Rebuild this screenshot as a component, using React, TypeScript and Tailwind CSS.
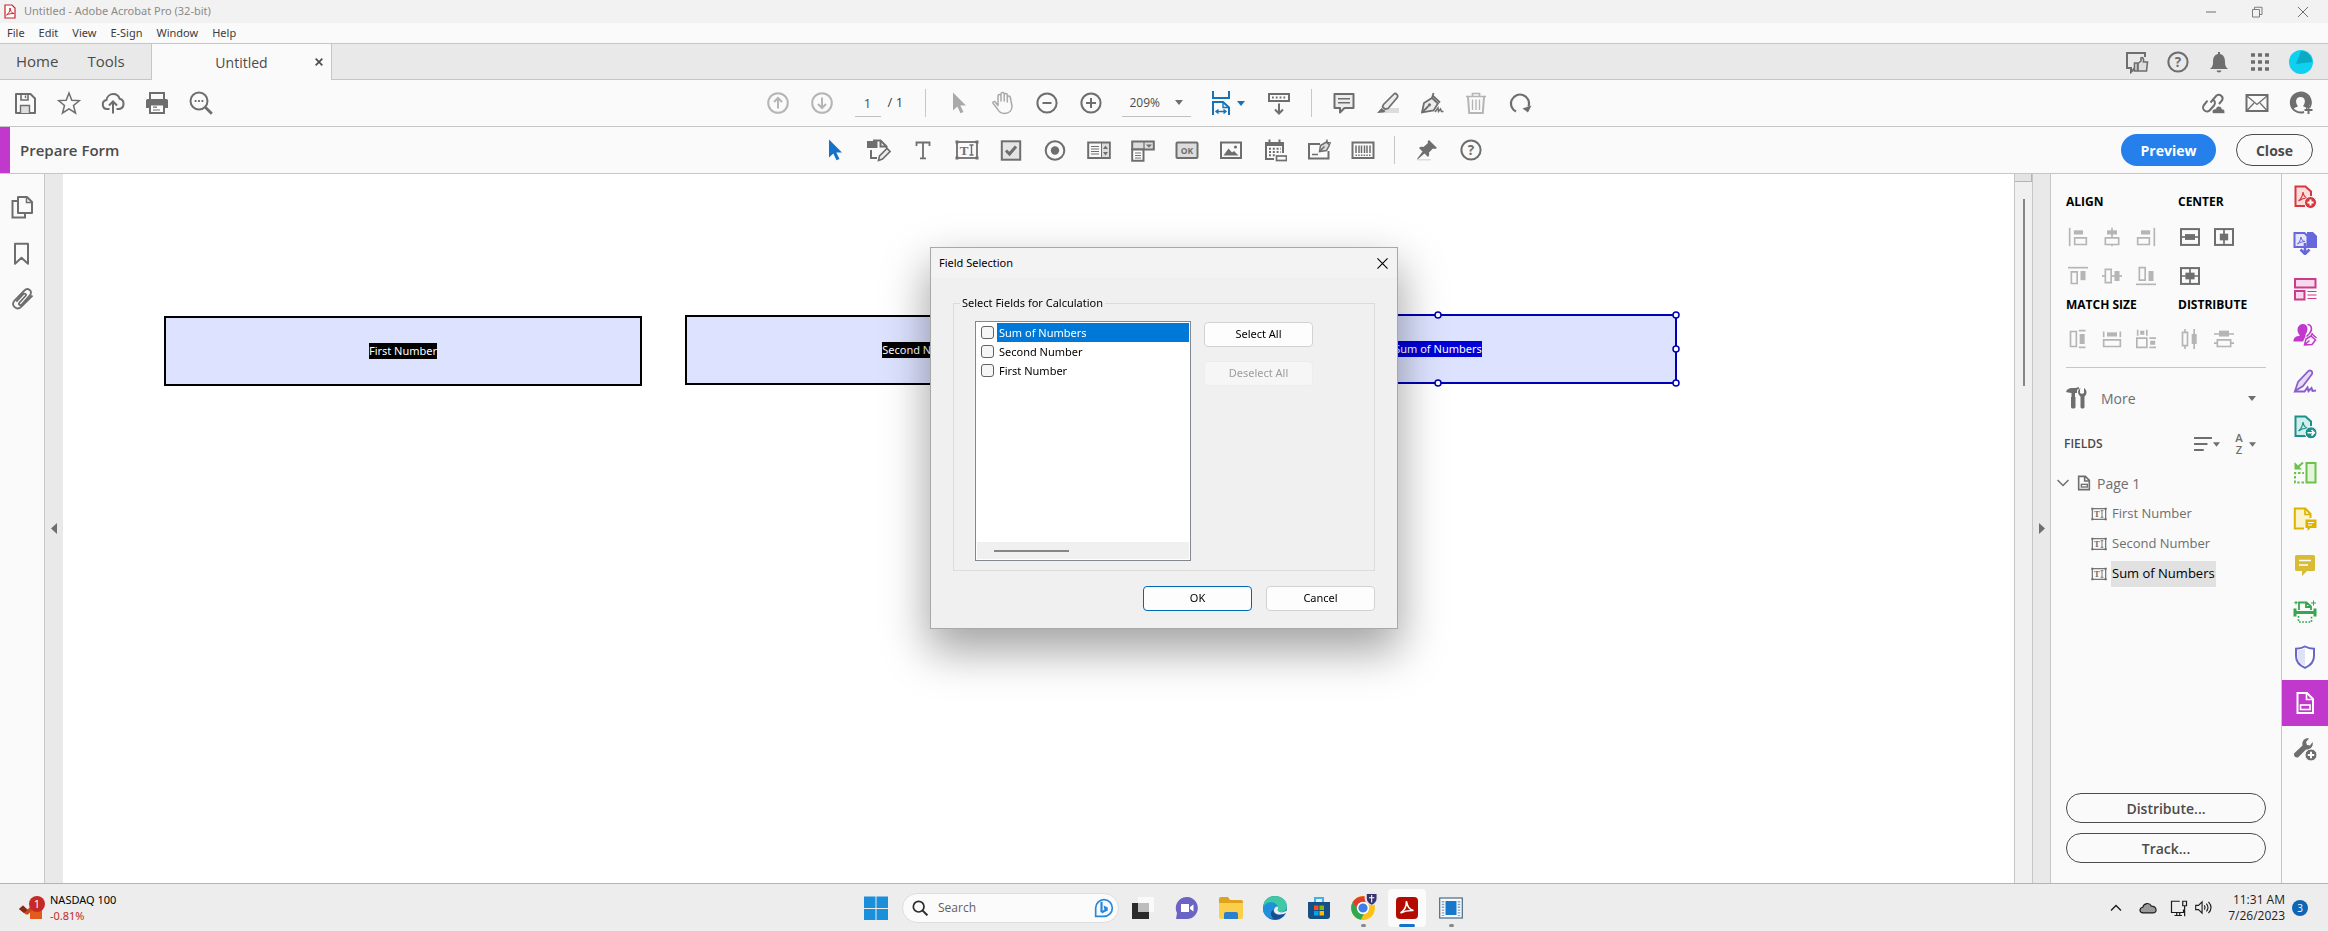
import React, { ReactNode, useState } from "react";

import clsx from "clsx";

interface SvgProps {
  children: ReactNode;
  className?: string;
}

function Svg({ children, className = "w-6 h-6" }: SvgProps) {
  return (
    <svg viewBox="0 0 24 24" fill="none" stroke="currentColor" strokeWidth="2" className={clsx("shrink-0", className)} aria-hidden="true">
      {children}
    </svg>
  );
}

interface ToolProps {
  label: string;
  icon: ReactNode;
  className?: string;
}

function Tool({ label, icon, className = "" }: ToolProps) {
  return (
    <button aria-label={label} className={clsx("w-11 h-11 flex items-center justify-center shrink-0", className)}>
      {icon}
    </button>
  );
}

function Caret({ className = "" }: { className?: string }) {
  return (
    <svg viewBox="0 0 8 5" className={clsx("w-2 h-[5px] shrink-0", className)} fill="currentColor" aria-hidden="true">
      <path d="M0 0h8L4 5z" />
    </svg>
  );
}

function Separator({ className = "" }: { className?: string }) {
  return <div className={clsx("w-px h-7 bg-[#c8c8c8] shrink-0", className)} />;
}

/* Shared drawings */

const helpIcon = (
  <Svg>
    <circle cx="12" cy="12" r="9.6" />
    <text x="12" y="16.8" textAnchor="middle" fontSize="13.5" fontWeight="700" fill="currentColor" stroke="none">?</text>
  </Svg>
);

const textFieldIcon = (
  <Svg>
    <rect x="2" y="4" width="20" height="16" strokeWidth="1.8" />
    <path d="M.5 2.500h3v3h-3zM20.500 2.500h3v3h-3zM.5 18.500h3v3h-3zM20.500 18.500h3v3h-3z" fill="currentColor" stroke="none" />
    <text x="9" y="16.600" textAnchor="middle" fontSize="13" fontWeight="700" fontFamily="Liberation Serif, serif" fill="currentColor" stroke="none">T</text>
    <path d="M14.500 7h4M14.500 17h4M16.500 7v10" strokeWidth="1.400" />
  </Svg>
);

const saveIcon = (
  <Svg>
    <path d="M3 3h14.500L22 7.500V22H3z" strokeLinejoin="round" />
    <path d="M8 3v6h7V3" strokeWidth="1.6" />
    <path d="M12.500 4.500v2.500" strokeWidth="1.400" />
    <path d="M7.500 22v-7.500h9V22" fill="#dedede" strokeWidth="1.400" />
  </Svg>
);

const starIcon = (
  <Svg>
    <path d="M12 2l2.800 7.200 7.700.4-6 4.900 2 7.500-6.500-4.200L5.500 22l2-7.500-6-4.900 7.700-.4z" strokeWidth="1.500" />
  </Svg>
);

const cloudUpIcon = (
  <Svg>
    <path d="M8.500 18H6a4.500 4.500 0 0 1-.6-8.900C6 5.500 9 3 12.300 3c3 0 5.400 1.800 6.300 4.800A5.200 5.200 0 0 1 18 18h-2.500" />
    <path d="M12 22.500V11M8 14.500l4-4 4 4" />
  </Svg>
);

const printIcon = (
  <Svg>
    <path d="M5 8V2h14v6" />
    <path d="M1 9.500A1.500 1.500 0 0 1 2.500 8h19A1.500 1.500 0 0 1 23 9.500V17h-4v-3H5v3H1z" fill="currentColor" stroke="none" />
    <path d="M5 13.500h14V22H5z" fill="#fff" />
    <path d="M8 16.200h4M8 19h7" strokeWidth="1.200" />
  </Svg>
);

const searchDotsIcon = (
  <Svg>
    <circle cx="10" cy="10" r="8.500" />
    <path d="M16.300 16.300l6.500 6.500" strokeWidth="2.800" />
    <path d="M5.700 10h1.800M9.100 10h1.800M12.500 10h1.800" strokeWidth="1.800" />
  </Svg>
);

const pageUpIcon = (
  <Svg>
    <circle cx="12" cy="12" r="9.800" />
    <path d="M12 17.500V7M8 11l4-4 4 4" />
  </Svg>
);

const pageDownIcon = (
  <Svg>
    <circle cx="12" cy="12" r="9.800" />
    <path d="M12 6.500V17M8 13l4 4 4-4" />
  </Svg>
);

const cursorIcon = (
  <Svg>
    <path d="M6 1.500v18l4.300-4 3.200 6.700 3-1.300-3.200-6.500h5.700z" fill="currentColor" stroke="none" />
  </Svg>
);

const handIcon = (
  <Svg>
    <path d="M7 14.500V5a1.500 1.500 0 0 1 3 0v5V3a1.500 1.500 0 0 1 3.200 0v7V4a1.500 1.500 0 0 1 3.100 0v7V6.500a1.500 1.500 0 0 1 3 0L21 15c0 4-2.500 7.500-7.500 7.500-3.500 0-5.500-1.500-7-4.500L2 12.300c-.6-1.300.8-2.400 2-1.600z" strokeWidth="1.500" strokeLinejoin="round" />
  </Svg>
);

const minusIcon = (
  <Svg>
    <circle cx="12" cy="12" r="9.600" />
    <path d="M7.500 12h9" />
  </Svg>
);

const plusIcon = (
  <Svg>
    <circle cx="12" cy="12" r="9.600" />
    <path d="M7 12h10M12 7v10" />
  </Svg>
);

const fitWidthIcon = (
  <Svg>
    <path d="M4 0v7h16V0M4 24V11h10l6 5.500V24" />
    <path d="M14 11v5.500h6" strokeWidth="1.400" />
    <path d="M7.500 20.500h9M9.500 18.500l-2.500 2 2.500 2M14.500 18.500l2.500 2-2.500 2" strokeWidth="1.400" />
  </Svg>
);

const keyboardDownIcon = (
  <Svg>
    <rect x="2" y="3" width="20" height="7" />
    <path d="M5 6.500h14" strokeDasharray="1.800 2" />
    <path d="M12 12.500V22M8 18.500l4 4 4-4" />
  </Svg>
);

const commentIcon = (
  <Svg>
    <path d="M2.500 3h19v14h-9L8 21.500V17H2.500z" strokeLinejoin="round" fill="#ececec" />
    <path d="M6 7.800h12M6 11.800h12" strokeWidth="1.400" />
  </Svg>
);

const highlightIcon = (
  <Svg>
    <path d="M9 17h14v5H8z" fill="#dcdcdc" stroke="none" />
    <path d="M7.500 13.500L18 3c1.500-1.400 4.800 1 3.300 3.500L12 17.500l-3 .5-2.500-2z" strokeWidth="1.700" fill="#ececec" />
    <path d="M5.500 17l4 3-1.500 1.500L1 22z" fill="currentColor" stroke="none" />
  </Svg>
);

const penIcon = (
  <Svg>
    <path d="M2 21.500l2-9.500 8-5 6 5.500-4.500 7z" strokeWidth="1.800" fill="#ececec" />
    <path d="M2 21.500l6.500-6.500M12 7l1.500-5M12.500 4.500l7.500 7" strokeWidth="1.800" />
    <circle cx="9.500" cy="13.800" r="1.600" fill="currentColor" stroke="none" />
    <path d="M15 21l3-4 .5 3.500 2-2.500 1 2.500h2" strokeWidth="1.500" />
  </Svg>
);

const trashIcon = (
  <Svg>
    <path d="M2 5.500h20M8.500 5V2.500h7V5" strokeWidth="1.700" />
    <path d="M4 6l1.200 16h13.600L20 6" strokeWidth="2" />
    <path d="M8.500 8.500v10.500M12 8.500v10.500M15.500 8.500v10.500" strokeWidth="1.300" />
  </Svg>
);

const rotateIcon = (
  <Svg>
    <path d="M8 20.600A9 9 0 1 1 20.500 15.500" strokeWidth="2.200" />
    <path d="M14.500 17.500l9-3-3.500 7z" fill="currentColor" stroke="none" />
  </Svg>
);

const linkCloudIcon = (
  <Svg>
    <path d="M9.500 11.500l6-7a3.800 3.800 0 0 1 5.500 5l-3 3.500M12 8.500a4 4 0 0 1 1 6l-4 4.500a3.800 3.800 0 0 1-6-5l3.500-4.300" />
    <path d="M12 22.500c-2-3 .6-5 2.600-4.500 1.500-4.500 6-3 6.400 0 2.600 0 3.300 2.600 2.500 4.500z" fill="currentColor" stroke="#fafafa" strokeWidth=".6" />
  </Svg>
);

const mailIcon = (
  <Svg>
    <rect x="1.500" y="4" width="21" height="16" />
    <path d="M2 5l10 8.500L22 5M2 19.500l7-7.500M22 19.500l-7-7.500" strokeWidth="1.300" />
  </Svg>
);

const addPersonIcon = (
  <Svg>
    <path d="M20.500 16.500A10 10 0 1 0 15 21" strokeWidth="2" />
    <path d="M4 18.500c1-2 3.500-2 5-3.500-2.700-2.500-3-9 2.500-9s5.200 6.500 2.500 9c.8.8 1.700 1 3 1.500V19l5-7C21 5 16 2 11.500 2S1 6 2 12.500z" fill="currentColor" stroke="none" fillRule="evenodd" />
    <path d="M19.500 15v8M15.500 19h8" strokeWidth="2" />
  </Svg>
);

const feedbackIcon = (
  <Svg>
    <path d="M20 7V3H2v15h4v4l4-4" />
    <path d="M9.500 13h3v8h-3zM13 13.500l3-2.500V8c2-1 3 .5 2.500 4h4l-1 9H13z" strokeWidth="1.600" fill="#dedede" />
  </Svg>
);

const bellIcon = (
  <Svg>
    <path d="M11 2h2v2c4 1 5 4 5 8s1 5 3 7H3c2-2 3-3 3-7s1-7 5-8zM9.500 20.500h5c-.5 2.500-4.500 2.500-5 0z" fill="currentColor" stroke="none" />
  </Svg>
);

const appsIcon = (
  <Svg>
    <path d="M3 5h18M3 12h18M3 19h18" strokeWidth="3.600" strokeDasharray="4 3" />
  </Svg>
);

const formEditIcon = (
  <Svg>
    <path d="M.5 4h9v5h-9z" fill="currentColor" />
    <path d="M6 2.500h7.500l6 6v1.500M13.500 2.500v6h6M4 12v8h6" />
    <path d="M11.500 22.500l1-4.500 7.500-7.500 3 3-7.500 7.500z" strokeWidth="1.600" fill="#ececec" />
  </Svg>
);

const textIcon = (
  <Svg>
    <path d="M5.500 8V4.500h13V8M12 4.500v15.500M9 20.300h6" strokeWidth="1.800" />
  </Svg>
);

const checkFieldIcon = (
  <Svg>
    <rect x="2.800" y="3.300" width="18.400" height="18.400" fill="#e4e4e4" />
    <path d="M7 12.500l3.500 3.500L17 8.500" strokeWidth="3" />
  </Svg>
);

const radioFieldIcon = (
  <Svg>
    <circle cx="12" cy="12.500" r="9.300" />
    <circle cx="12" cy="12.500" r="4.200" fill="currentColor" stroke="none" />
  </Svg>
);

const listBoxIcon = (
  <Svg>
    <rect x="1.200" y="4.500" width="21.600" height="15.500" />
    <path d="M14.500 5h8v14.500h-8z" fill="#dcdcdc" strokeWidth="1" />
    <path d="M4 8.500h8M4 11h8M4 13.500h8M4 16h8" strokeWidth="1.200" />
    <path d="M16 11l2.500-3.500L21 11zM16 14l2.500 3.500L21 14z" fill="currentColor" stroke="none" />
  </Svg>
);

const dropdownFieldIcon = (
  <Svg>
    <rect x="1.200" y="3.500" width="21.600" height="8" fill="#dcdcdc" />
    <path d="M13 3.500v8" strokeWidth="1.200" />
    <path d="M15 6.500h6l-3 3.200z" fill="currentColor" stroke="none" />
    <path d="M1.200 11.500h11.300v11.300H1.200z" fill="#fff" />
    <path d="M4 15h6M4 17.500h6M4 20h6" strokeWidth="1.100" />
  </Svg>
);

const okFieldIcon = (
  <Svg>
    <rect x="1.500" y="4.500" width="21" height="15.500" rx="1" fill="#dcdcdc" />
    <text x="12" y="15.500" textAnchor="middle" fontSize="8.500" fontWeight="700" fill="currentColor" stroke="none">OK</text>
  </Svg>
);

const imageFieldIcon = (
  <Svg>
    <rect x="2" y="4.500" width="20" height="15.500" />
    <path d="M4.500 17.500l5-7 3.500 4 2-1.500 4.500 4.500z" fill="currentColor" stroke="none" />
    <circle cx="16.500" cy="9" r="1.600" fill="currentColor" stroke="none" />
  </Svg>
);

const dateFieldIcon = (
  <Svg>
    <path d="M2 4h19v4H2zM5.500 1.500h2V4h-2zM15.500 1.500h2V4h-2z" fill="currentColor" stroke="none" />
    <path d="M11 21H3V6h17v9" />
    <path d="M6 10.800h12M6 14h12M6 17.200h6" strokeDasharray="2 1.800" />
    <rect x="13.500" y="18" width="10" height="4.500" strokeWidth="1.700" />
  </Svg>
);

const signFieldIcon = (
  <Svg>
    <path d="M13 6H2v14.500h19.500V13" />
    <path d="M12.500 13.500l1-6 6-3.500 3 3-3 5.500z" strokeWidth="1.500" fill="#dcdcdc" />
    <path d="M12.500 13.500l5-5M20 1.500v3l4 .5M5 16.500h6" strokeWidth="1.500" />
  </Svg>
);

const barcodeIcon = (
  <Svg>
    <rect x="1.500" y="4.500" width="21" height="15.500" />
    <path d="M5 7.500v7.500M8 7.500v7.500M10.500 7.500v7.500M13.500 7.500v7.500M16 7.500v7.500M19 7.500v7.500" strokeWidth="1.500" />
    <path d="M4.500 17.200h15" strokeWidth="1.500" strokeDasharray="1.500 1.200" />
  </Svg>
);

const pinIcon = (
  <Svg>
    <path d="M3 21h13v1.500H2z" fill="#dcdcdc" stroke="none" />
    <path d="M14 2l8 8-2 1-2-.5-4 4c.5 2.500 0 3.500-1 4.500l-3.500-3.500L2.500 21.500l-.5-.5 5.500-7.500L4 10c1-1 2.500-1.500 4.500-1l4.500-4-.5-1.500z" fill="currentColor" stroke="none" />
  </Svg>
);

const pagesIcon = (
  <Svg>
    <path d="M8 2h9l5 5v11H8z" strokeLinejoin="round" />
    <path d="M16.500 2v5.500H22" strokeWidth="1.500" />
    <path d="M7.500 6H2.500v16.500H15V19" />
  </Svg>
);

const bookmarkIcon = (
  <Svg>
    <path d="M5 1.800h13v20l-6.500-6L5 21.800z" strokeLinejoin="round" />
  </Svg>
);

const clipIcon = (
  <Svg>
    <path d="M15.500 9l-6 6.500c-1.600 2 .6 3.600 2.200 2l8.300-9.300c3.300-4.200-2.200-8.200-5.600-4.700L4.500 13.500c-4 5 2.200 10.500 6.700 6.300L22.500 8.500M15.500 9c1.300-1.600-.7-3.300-2.200-1.800l-7 7.500" strokeWidth="1.800" />
  </Svg>
);

/* Arrange icons in the side panel */

const alignLeft = <Svg className="w-5 h-5"><path d="M2 1v22" /><path d="M7 4h11v5H7z" fill="currentColor" stroke="none" /><path d="M8 13h14v8H8z" /></Svg>;
const alignCenter = <Svg className="w-5 h-5"><path d="M12 1v22" /><path d="M6 4h12v5H6z" fill="currentColor" stroke="none" /><path d="M4 13h16v8H4z" fill="#fafafa" /></Svg>;
const alignRight = <Svg className="w-5 h-5"><path d="M22 1v22" /><path d="M6 4h11v5H6z" fill="currentColor" stroke="none" /><path d="M2 13h14v8H2z" /></Svg>;
const alignTop = <Svg className="w-5 h-5"><path d="M0 2h24" /><path d="M15 6h6v11h-6z" fill="currentColor" stroke="none" /><path d="M4 7h7v14H4z" /></Svg>;
const alignMiddle = <Svg className="w-5 h-5"><path d="M0 12h24" /><path d="M15 6h6v12h-6z" fill="currentColor" stroke="none" /><path d="M4 4h7v16H4z" fill="#fafafa" /></Svg>;
const alignBottom = <Svg className="w-5 h-5"><path d="M0 22h24" /><path d="M15 6h6v12h-6z" fill="currentColor" stroke="none" /><path d="M4 2h7v15H4z" /></Svg>;
const centerVert = <Svg className="w-5 h-5"><rect x="1.200" y="2.500" width="21.600" height="19" strokeWidth="2.400" /><path d="M1 12h22" /><path d="M6 8.500h12v7H6z" fill="currentColor" stroke="none" /></Svg>;
const centerHoriz = <Svg className="w-5 h-5"><rect x="1.200" y="2.500" width="21.600" height="19" strokeWidth="2.400" /><path d="M12 2v20" /><path d="M7 8h10v8H7z" fill="currentColor" stroke="none" /></Svg>;
const centerBoth = <Svg className="w-5 h-5"><rect x="1.200" y="2.500" width="21.600" height="19" strokeWidth="2.400" /><path d="M12 2v20M1 12h22" /><path d="M6.500 8h11v8h-11z" fill="currentColor" stroke="none" /></Svg>;
const matchHeight = <Svg className="w-5 h-5"><path d="M3 3h7v18H3z" /><path d="M13 2h8M13 22h8" /><path d="M14 6h6v12h-6z" fill="currentColor" stroke="none" /></Svg>;
const matchWidth = <Svg className="w-5 h-5"><path d="M2 3v7M22 3v7M2 13h20v8H2z" /><path d="M6 4h12v5H6z" fill="currentColor" stroke="none" /></Svg>;
const matchBoth = <Svg className="w-5 h-5"><path d="M2 1v7M13 1v7M1 11h12v11H1zM16 11h8M16 22h8" /><path d="M5 2h5v5H5zM17 14h6v5h-6z" fill="currentColor" stroke="none" /></Svg>;
const distHoriz = <Svg className="w-5 h-5"><path d="M6 0v24M17 0v24" /><path d="M3 4h6v16H3z" fill="#fafafa" /><path d="M14 6h6v12h-6z" fill="currentColor" stroke="none" /></Svg>;
const distVert = <Svg className="w-5 h-5"><path d="M0 6h24M0 17h24" /><path d="M6 2h12v7H6z" fill="currentColor" stroke="none" /><path d="M4 13h16v8H4z" fill="#fafafa" /></Svg>;

/* Tool shortcuts on the far right */

const rail = [
  {
    label: "Create PDF",
    color: "text-[#d7373f]",
    icon: (
      <Svg>
        <path d="M12 21H2.500V1.500h10l5.500 5V11" fill="#f9dcdc" />
        <path d="M5.500 16c2-1.500 4-5 4.500-9 .5 4 2 5.500 4.500 6-3.500 0-6 .8-9 3z" strokeWidth="1.200" />
        <circle cx="17.500" cy="17.500" r="6" fill="currentColor" stroke="#fafafa" strokeWidth="1" />
        <path d="M14.500 17.500h6M17.500 14.500v6" stroke="#fff" />
      </Svg>
    ),
  },
  {
    label: "Combine Files",
    color: "text-[#6767dc]",
    icon: (
      <Svg>
        <path d="M14 1h6l4 4v12H14z" fill="currentColor" stroke="none" />
        <path d="M1.500 2h10l3 3v11h-13z" fill="#e4e4fb" />
        <path d="M4.500 13c2-1.500 3-4 3.500-7 .5 3 1.500 4 4 4.500-3 .2-5 .8-7.500 2.500z" strokeWidth="1" />
        <path d="M12 12v10M7.500 18.500l4.500 4.500 4.500-4.500" strokeWidth="2.600" />
      </Svg>
    ),
  },
  {
    label: "Organize Pages",
    color: "text-[#cb3a8b]",
    icon: (
      <Svg>
        <rect x="2" y="2" width="20.500" height="8.500" fill="#f8d8ea" />
        <rect x="2" y="14" width="9.500" height="8.500" fill="#f8d8ea" />
        <path d="M14.500 14.500h9M14.500 18h9M14.500 21.500h9" strokeWidth="1.200" />
      </Svg>
    ),
  },
  {
    label: "Request E-signatures",
    color: "text-[#c038cc]",
    icon: (
      <Svg>
        <path d="M14.500 1.500c4 0 5.500 5 2 9l-3 3" strokeWidth="1.500" />
        <path d="M10 1c5.500 0 5.500 7 2.500 10.500v2L10 18.500H.5c0-4 2-5 6.500-6C2.500 8 4.500 1 10 1z" fill="currentColor" stroke="none" />
        <path d="M11.500 22l1.500-6 5-3 4.500 4-3.500 4.500zM11.500 22l5-4.500M18 13l1.500-3M19 11l4.500 4" strokeWidth="1.500" fill="#fafafa" />
      </Svg>
    ),
  },
  {
    label: "Fill & Sign",
    color: "text-[#8a5ccf]",
    icon: (
      <Svg>
        <path d="M2 22l3-9L15.500 2c2-1.500 4.500.5 3.500 3L10 17z" fill="#e6dbf7" strokeWidth="1.700" />
        <path d="M1.500 22.500h10l3-4 1 3.500 3-3 1 3 3.500-.5" />
      </Svg>
    ),
  },
  {
    label: "Export PDF",
    color: "text-[#1f8f8a]",
    icon: (
      <Svg>
        <path d="M13 21H2.500V1.500h10l5.500 5V11" fill="#cfeeec" />
        <path d="M5.500 16c2-1.500 4-5 4.500-9 .5 4 2 5.500 4.500 6-3.500 0-6 .8-9 3z" strokeWidth="1.200" />
        <circle cx="18" cy="17.800" r="6" fill="currentColor" stroke="#fafafa" strokeWidth="1" />
        <path d="M14.500 17.800h6.500M18.500 15l2.800 2.800-2.800 2.800" stroke="#fff" strokeWidth="1.500" />
      </Svg>
    ),
  },
  {
    label: "Crop Pages",
    color: "text-[#6cc24a]",
    icon: (
      <Svg>
        <path d="M13.500 2h9v19.500h-9z" fill="#e3f5da" />
        <path d="M11 21.500H2V12h9" strokeDasharray="2.500 1.800" />
        <path d="M10 1.500L5 6" />
        <path d="M1.500 1v7.500H9z" fill="currentColor" stroke="none" />
      </Svg>
    ),
  },
  {
    label: "Send for Comments",
    color: "text-[#dbb300]",
    icon: (
      <Svg>
        <path d="M11 21.500H1.800V1.500h10.500L17.500 7v4" fill="#fbf3cc" />
        <path d="M12 1.500V7.500h5.500" strokeWidth="1.600" />
        <path d="M12.500 12.500h11v8.500h-6l-3 3v-3h-2z" fill="currentColor" stroke="none" />
        <path d="M15 15.500h6M15 18h4" stroke="#fff" strokeWidth="1.200" />
      </Svg>
    ),
  },
  {
    label: "Comment",
    color: "text-[#d9bb36]",
    icon: (
      <Svg>
        <path d="M2 3.500A1.500 1.500 0 0 1 3.500 2h17A1.500 1.500 0 0 1 22 3.500v13a1.500 1.500 0 0 1-1.500 1.500H14l-5 5v-5H3.500A1.500 1.500 0 0 1 2 16.500z" fill="currentColor" stroke="none" />
        <path d="M6 7.500h12M6 12h9" stroke="#fff" strokeWidth="1.600" />
      </Svg>
    ),
  },
  {
    label: "Scan & OCR",
    color: "text-[#36a650]",
    icon: (
      <Svg>
        <path d="M6 11V3.500h7.500l4.500 4V11M13 3.500V8h5" strokeWidth="1.800" />
        <path d="M2 9.500v8M22 9.500v8M2 13.500h20" strokeWidth="3" />
        <path d="M5.500 17v6h13v-6" strokeDasharray="1.800 1.400" strokeWidth="1.600" />
        <path d="M3 2v3.500M1.200 3.700h3.600M20.500 1.500v5M18 4h5" strokeWidth="1" />
      </Svg>
    ),
  },
  {
    label: "Protect",
    color: "text-[#6767c9]",
    icon: (
      <Svg>
        <path d="M12 1.500c3 1.800 5.500 2.300 9 2.300V11c0 6-3.500 9.500-9 11.800C6.500 20.500 3 17 3 11V3.800c3.500 0 6-.5 9-2.300z" fill="#fff" />
        <path d="M12 3.500v17C7 18.500 4.500 15 4.500 11V5.300c3 0 5-.5 7.500-1.800z" fill="#e0e0f7" stroke="none" />
      </Svg>
    ),
  },
  {
    label: "Prepare Form",
    color: "bg-[#c038cc] text-white",
    icon: (
      <Svg>
        <path d="M4.500 2h9.500l6 6v14h-15.500z" />
        <path d="M13.500 2v6.500H20" strokeWidth="1.600" />
        <rect x="7.500" y="14" width="9.500" height="4.500" strokeWidth="1.600" />
      </Svg>
    ),
  },
  {
    label: "More Tools",
    color: "text-[#6e6e6e]",
    icon: (
      <Svg>
        <path d="M1.500 16l8-7.500C8.500 4 12 .5 16 1.500l-3 3.500 1 3 3 .5 2.500-3.500c1.500 4.500-3 8.500-6.500 7.500l-7.500 7.500c-2.500 2-6-1.500-4-4z" fill="currentColor" stroke="none" />
        <circle cx="18" cy="18" r="6" fill="currentColor" stroke="#fafafa" strokeWidth="1" />
        <path d="M14.800 18h6.400M18 14.800v6.400" stroke="#fff" />
      </Svg>
    ),
  },
];

const fields = ["First Number", "Second Number", "Sum of Numbers"];

const menus = ["File", "Edit", "View", "E-Sign", "Window", "Help"];

function WindowHeader() {
  return (
    <>
      <div className="h-[23px] bg-[#f2f2f2] flex items-center pl-1 text-[#8a8a8a] font-['Noto_Sans',sans-serif]">
        <svg viewBox="0 0 12 15" className="w-3 h-[15px]" fill="#fff" stroke="#c8232c" strokeWidth="1.200" aria-hidden="true">
          <path d="M1 1h7l3 3v10H1z" />
          <path d="M2.500 11C5 9.500 6 7 6 4c.5 3 1.500 5 4 5.500-3 0-5 .3-7.500 1.500z" strokeWidth="1" />
        </svg>
        <span className="ml-2 text-[11px]">Untitled - Adobe Acrobat Pro (32-bit)</span>
        <div className="ml-auto flex pr-[2px] text-[#707070]">
          <button aria-label="Minimize" className="w-[46px] h-5 flex items-center justify-center">
            <Svg className="w-3 h-3"><path d="M2 12h20" /></Svg>
          </button>
          <button aria-label="Restore" className="w-[46px] h-5 flex items-center justify-center">
            <Svg className="w-3 h-3"><path d="M3 7h14v15H3zM7 7V2.500h15V17h-5" strokeWidth="1.800" /></Svg>
          </button>
          <button aria-label="Close window" className="w-[46px] h-5 flex items-center justify-center">
            <Svg className="w-3 h-3"><path d="M2 2l20 20M22 2L2 22" /></Svg>
          </button>
        </div>
      </div>

      <nav className="h-5 flex items-center gap-[14px] pl-[7px] text-[11px] text-[#3c3c3c] font-['Noto_Sans',sans-serif]">
        {menus.map((m) => (
          <button key={m}>{m}</button>
        ))}
      </nav>

      <div className="h-[37px] bg-[#e9e9e9] border-y border-[#c6c6c6] flex text-[#4b4b4b]">
        <div className="w-[151px] flex items-center pl-4 gap-[29px] text-[15px]">
          <button>Home</button>
          <button>Tools</button>
        </div>
        <div className="w-[181px] -mb-px bg-[#fafafa] border-x border-[#c6c6c6] flex items-center pl-4 pr-2 text-[14px]">
          <button className="flex-1 text-center">Untitled</button>
          <button aria-label="Close tab" className="w-2">
            <Svg className="w-2 h-2"><path d="M2 2l20 20M22 2L2 22" strokeWidth="5" /></Svg>
          </button>
        </div>
        <div className="ml-auto flex items-center pr-[7px] text-[#6e6e6e]">
          <button aria-label="Feedback" className="w-[41px] flex justify-center">{feedbackIcon}</button>
          <button aria-label="Help" className="w-[41px] flex justify-center">{helpIcon}</button>
          <button aria-label="Notifications" className="w-[41px] flex justify-center">{bellIcon}</button>
          <button aria-label="Apps" className="w-[41px] flex justify-center">{appsIcon}</button>
          <button aria-label="Account" className="w-[41px] flex justify-center">
            <Svg>
              <circle cx="12" cy="12" r="12" fill="#0fd0ee" stroke="none" />
              <path d="M12 1a11 11 0 0 1 11 11l-16 2z" fill="#0aa9c4" stroke="none" />
            </Svg>
          </button>
        </div>
      </div>
    </>
  );
}

function MainToolbar() {
  return (
    <div className="h-[47px] border-b border-[#c6c6c6] flex items-center text-[#6e6e6e]">
      <div className="flex-1 flex pl-[3px]">
        <Tool label="Save" icon={saveIcon} />
        <Tool label="Star" icon={starIcon} />
        <Tool label="Upload" icon={cloudUpIcon} />
        <Tool label="Print" icon={printIcon} />
        <Tool label="Find" icon={searchDotsIcon} />
      </div>
      <div className="flex items-center pr-[29px]">
        <Tool label="Previous page" icon={pageUpIcon} className="text-[#b5b5b5]" />
        <Tool label="Next page" icon={pageDownIcon} className="text-[#b5b5b5]" />
        <input aria-label="Page number" defaultValue="1" className="ml-[11px] w-[26px] h-7 border-b border-[#c0c0c0] text-center text-[13px] text-[#4b4b4b] bg-transparent" />
        <span className="ml-[7px] w-[18px] text-[13px] text-[#3c3c3c] whitespace-nowrap">/ 1</span>
        <Separator className="ml-[19px] mr-[11px]" />
        <Tool label="Select" icon={cursorIcon} className="text-[#a9a9a9]" />
        <Tool label="Pan" icon={handIcon} className="text-[#a9a9a9]" />
        <Tool label="Zoom out" icon={minusIcon} />
        <Tool label="Zoom in" icon={plusIcon} />
        <button aria-label="Zoom level" className="ml-[9px] w-[69px] h-7 border-b border-[#c0c0c0] flex items-center justify-between pl-2 pr-2 text-[12px] text-[#4b4b4b]">
          209%
          <Caret className="text-[#6e6e6e]" />
        </button>
        <button aria-label="Fit width" className="ml-[18px] w-9 flex items-center justify-between text-[#1473b8]">
          {fitWidthIcon}
          <Caret />
        </button>
        <Tool label="Show keyboard" icon={keyboardDownIcon} className="ml-3" />
        <Separator className="ml-[10px] mr-[10px]" />
        <Tool label="Add comment" icon={commentIcon} />
        <Tool label="Highlight" icon={highlightIcon} />
        <Tool label="Sign" icon={penIcon} />
        <Tool label="Delete" icon={trashIcon} className="text-[#b5b5b5]" />
        <Tool label="Rotate" icon={rotateIcon} />
      </div>
      <div className="flex-1 flex justify-end pr-[5px]">
        <Tool label="Share link" icon={linkCloudIcon} />
        <Tool label="Email" icon={mailIcon} />
        <Tool label="Invite people" icon={addPersonIcon} />
      </div>
    </div>
  );
}

function FormToolbar() {
  return (
    <div className="h-[47px] border-b border-[#c6c6c6] flex items-center text-[#6e6e6e]">
      <div className="flex-1 self-stretch flex items-center border-l-10 border-[#c038cc] pl-[10px]">
        <h1 className="text-[15px] font-semibold text-[#4b4b4b]">Prepare Form</h1>
      </div>
      <div className="flex items-center pr-[27px]">
        <Tool label="Select object" icon={cursorIcon} className="text-[#1473c8]" />
        <Tool label="Edit form" icon={formEditIcon} />
        <Tool label="Add text" icon={textIcon} />
        <Tool label="Text field" icon={textFieldIcon} />
        <Tool label="Check box" icon={checkFieldIcon} />
        <Tool label="Radio button" icon={radioFieldIcon} />
        <Tool label="List box" icon={listBoxIcon} />
        <Tool label="Dropdown" icon={dropdownFieldIcon} />
        <Tool label="Button" icon={okFieldIcon} />
        <Tool label="Image field" icon={imageFieldIcon} />
        <Tool label="Date field" icon={dateFieldIcon} />
        <Tool label="Signature field" icon={signFieldIcon} />
        <Tool label="Barcode" icon={barcodeIcon} />
        <Separator className="ml-[9px] mr-[10px]" />
        <Tool label="Keep tool selected" icon={pinIcon} />
        <Tool label="Form help" icon={helpIcon} />
      </div>
      <div className="flex-1 flex justify-end gap-5 pr-[15px] text-[14px] font-bold">
        <button className="w-[95px] h-8 rounded-full bg-[#2680eb] text-white">Preview</button>
        <button className="w-[77px] h-8 rounded-full border border-[#4b4b4b] text-[#4b4b4b]">Close</button>
      </div>
    </div>
  );
}

interface FormFieldProps {
  name: string;
  className: string;
  selected?: boolean;
}

function FormField({ name, className, selected }: FormFieldProps) {
  return (
    <div className={clsx("absolute w-[478px] h-[70px] border-2 bg-[#dde3ff] flex items-center justify-center", selected ? "border-[#0000b4]" : "border-black", className)}>
      <span className={clsx("h-4 text-[11px] leading-4 text-white font-['Noto_Sans',sans-serif]", selected ? "bg-[#0000d8]" : "bg-black")}>{name}</span>
      {selected && (
        <svg viewBox="0 0 486 78" className="absolute -inset-[6px] w-[486px] h-[78px]" fill="#fff" stroke="#0000b4" strokeWidth="1.500" aria-hidden="true">
          {[5, 39, 73].map((y) =>
            [5, 243, 481].map((x) => (x === 243 && y === 39 ? null : <circle key={`${x}-${y}`} cx={x} cy={y} r="3" />))
          )}
        </svg>
      )}
    </div>
  );
}

function SidePanel() {
  return (
    <aside className="w-[232px] border-x border-[#c6c6c6] flex flex-col pt-[19px] pb-5 text-[#6e6e6e] shrink-0">
      <div className="grid grid-cols-[112px_1fr] pl-[15px] text-[12px] font-bold text-black">
        <div>
          <h2 className="leading-[18px]">ALIGN</h2>
          <div className="grid grid-cols-[34px_34px_34px] pl-[2px] pt-[6px] pb-px text-[#b5b5b5]">
            {[alignLeft, alignCenter, alignRight, alignTop, alignMiddle, alignBottom].map((icon, i) => (
              <button key={i} aria-label={`Align ${i + 1}`} className="h-[39px] flex items-center">{icon}</button>
            ))}
          </div>
          <h2 className="leading-[18px]">MATCH SIZE</h2>
          <div className="grid grid-cols-[34px_34px_34px] pl-[2px] pt-[6px] text-[#b5b5b5]">
            {[matchHeight, matchWidth, matchBoth].map((icon, i) => (
              <button key={i} aria-label={`Match ${i + 1}`} className="h-[37px] flex items-center">{icon}</button>
            ))}
          </div>
        </div>
        <div>
          <h2 className="leading-[18px]">CENTER</h2>
          <div className="grid grid-cols-[34px_34px] pl-[2px] pt-[6px] pb-px text-[#6e6e6e]">
            {[centerVert, centerHoriz, centerBoth].map((icon, i) => (
              <button key={i} aria-label={`Center ${i + 1}`} className="h-[39px] flex items-center">{icon}</button>
            ))}
          </div>
          <h2 className="leading-[18px]">DISTRIBUTE</h2>
          <div className="grid grid-cols-[34px_34px] pl-[2px] pt-[6px] text-[#b5b5b5]">
            {[distHoriz, distVert].map((icon, i) => (
              <button key={i} aria-label={`Distribute ${i + 1}`} className="h-[37px] flex items-center">{icon}</button>
            ))}
          </div>
        </div>
      </div>

      <hr className="mt-[10px] mx-[15px] border-[#c6c6c6]" />

      <button className="mt-[18px] mx-[15px] h-6 flex items-center pr-[10px] text-[13px]">
        <Svg>
          <path d="M0 6c1-3 3-4 6-4h5v5H9v4H5.500V7L2 6.500zM5 11h4.500v10c0 2-4.500 2-4.500 0zM14 2v5l2 1 2-1V2c3 1.500 3.500 6.500.5 8.500V21c0 2-4 2-4 0V10.500c-3-2-3.500-7 .5-8.500z" fill="currentColor" stroke="none" />
          <path d="M10 3l3-1" />
        </Svg>
        <span className="ml-[11px] text-[14px]">More</span>
        <Caret className="ml-auto" />
      </button>

      <div className="mt-[22px] h-6 flex items-center pl-[13px]">
        <h2 className="text-[12px] font-semibold text-[#4b4b4b]">FIELDS</h2>
        <button aria-label="Sort order" className="ml-auto flex items-center gap-px">
          <Svg className="w-[18px] h-[18px]"><path d="M1 4h22M1 12h16M1 20h11" strokeWidth="2.600" strokeLinecap="round" /></Svg>
          <Caret className="w-[7px]" />
        </button>
        <button aria-label="Sort alphabetically" className="ml-[14px] mr-[25px] flex items-center gap-[5px]">
          <Svg className="w-[10px] h-[22px] overflow-visible">
            <text x="12" y="8" textAnchor="middle" fontSize="27" fontWeight="600" fill="currentColor" stroke="none">A</text>
            <text x="12" y="36" textAnchor="middle" fontSize="27" fontWeight="600" fill="currentColor" stroke="none">Z</text>
          </Svg>
          <Caret className="w-[7px]" />
        </button>
      </div>

      <div className="mt-[14px] h-[26px] flex items-center pl-[6px] text-[14px]">
        <Svg className="w-3 h-3"><path d="M1 6l11 11L23 6" strokeWidth="3" /></Svg>
        <Svg className="ml-[7px] w-4 h-4"><path d="M4 2h10l6 6v14H4zM13 2v7h7" strokeWidth="2.400" /><rect x="8" y="14" width="9" height="4" strokeWidth="2" /></Svg>
        <span className="ml-[5px]">Page 1</span>
      </div>
      <ul className="mt-[3px] pl-10 text-[13px]">
        {fields.map((f) => (
          <li key={f} className="h-[30px] flex items-center gap-1 [&>svg]:w-4 [&>svg]:h-4">
            {textFieldIcon}
            <button className={clsx("h-[26px] px-px text-[13px]", f === "Sum of Numbers" && "bg-[#e1e1e1] text-black")}>{f}</button>
          </li>
        ))}
      </ul>

      <div className="mt-auto mx-[15px] flex flex-col gap-[10px] text-[14px] font-semibold text-[#4b4b4b]">
        <button className="h-[30px] rounded-full border border-[#4b4b4b]">Distribute...</button>
        <button className="h-[30px] rounded-full border border-[#4b4b4b]">Track...</button>
      </div>
    </aside>
  );
}

const dialogButton = "w-[109px] h-[25px] rounded border border-[#d2d2d2] bg-[#fdfdfd] text-center";

function FieldSelectionDialog() {
  const [checked, setChecked] = useState<string[]>([]);

  const toggle = (name: string) =>
    setChecked((c) => (c.includes(name) ? c.filter((n) => n !== name) : [...c, name]));

  return (
    <div role="dialog" aria-label="Field Selection" className="fixed left-1/2 top-[247px] -translate-x-1/2 w-[468px] bg-[#f0f0f0] border border-[#a8a8a8] shadow-[0_20px_42px_2px_rgba(0,0,0,0.36)] pb-[17px] text-[11px] text-black font-['Noto_Sans',sans-serif]">
      <div className="h-[30px] flex items-center justify-between bg-[#f3f3f3] pl-2 pr-[7px]">
        <span>Field Selection</span>
        <button aria-label="Close dialog" className="p-[2px]">
          <Svg className="w-[11px] h-[11px]"><path d="M1 1l22 22M23 1L1 23" strokeWidth="2.400" /></Svg>
        </button>
      </div>

      <fieldset className="mt-[17px] mx-[22px] border border-[#dcdcdc] pl-[21px] pt-[10px] pb-[9px] flex">
        <legend className="-ml-[15px] px-[2px] leading-4">Select Fields for Calculation</legend>
        <div className="flex gap-[13px]">
          <div className="w-[216px] h-[240px] border border-[#828790] bg-white p-px flex flex-col">
            {[...fields].reverse().map((f, i) => (
              <label key={f} className="h-[19px] flex items-center pl-1 gap-[3px]">
                <input
                  type="checkbox"
                  checked={checked.includes(f)}
                  onChange={() => toggle(f)}
                  className="appearance-none w-[13px] h-[13px] rounded-[3px] border border-[#626262] bg-[#f6f6f6] checked:bg-[#0078d7]"
                />
                <span className={clsx("flex-1 pl-[2px] leading-[19px]", i === 0 && "bg-[#0078d7] text-white")}>{f}</span>
              </label>
            ))}
            <div className="mt-auto h-[17px] bg-[#f0f0f0] flex items-center pl-[17px]">
              <div className="w-[75px] h-[2px] bg-[#868686]" />
            </div>
          </div>
          <div className="flex flex-col gap-[14px] pt-px">
            <button className={dialogButton} onClick={() => setChecked(fields)}>Select All</button>
            <button className="w-[109px] h-[25px] rounded border border-[#ececec] bg-[#f6f6f6] text-[#9d9d9d]" disabled={checked.length === 0}>Deselect All</button>
          </div>
        </div>
      </fieldset>

      <div className="mt-[15px] mr-[22px] flex justify-end gap-[14px]">
        <button className="w-[109px] h-[25px] rounded border border-[#0067b4] bg-[#fdfdfd]">OK</button>
        <button className={dialogButton}>Cancel</button>
      </div>
    </div>
  );
}

interface TaskProps {
  label: string;
  children: ReactNode;
  running?: boolean;
  active?: boolean;
}

function Task({ label, children, running, active }: TaskProps) {
  return (
    <button aria-label={label} className="relative w-11 h-[47px] flex items-center justify-center">
      <span className={clsx("w-[38px] h-[38px] rounded flex items-center justify-center", active && "bg-[#fbfbfb]")}>{children}</span>
      {running && <span className={clsx("absolute bottom-1 h-[3px] rounded-full", active ? "w-4 bg-[#1473c8]" : "w-[5px] bg-[#888888]")} />}
    </button>
  );
}

function Taskbar() {
  return (
    <footer className="h-12 border-t border-[#b4b4b4] bg-[#ededed] flex items-center">
      <button className="flex-1 flex items-center pl-[19px] text-left">
        <svg viewBox="0 0 26 24" className="w-[26px] h-6" aria-hidden="true">
          <path d="M11 10h12v13H11z" fill="#e25a1c" />
          <path d="M0 13l4-3.500 4.500 4L14 8v5l-5 5.500H7z" fill="#c9481c" />
          <path d="M0 13l4-3.500 4.500 4.500-3.500 3z" fill="#8a2a14" />
          <circle cx="18" cy="8" r="8" fill="#c42b26" />
          <text x="18" y="12" textAnchor="middle" fontSize="11" fill="#fff">1</text>
        </svg>
        <span className="ml-[5px] flex flex-col text-[11px] leading-4 font-['Noto_Sans',sans-serif]">
          <span>NASDAQ 100</span>
          <span className="text-[#c42b1c]">-0.81%</span>
        </span>
      </button>

      <div className="flex items-center">
        <Task label="Start">
          <Svg>
            <path d="M0 .5h11.500V12H0zM12.500.5H24V12H12.500zM0 13h11.500v11H0zM12.500 13H24v11H12.500z" fill="#1a8fdc" stroke="none" />
          </Svg>
        </Task>
        <div className="ml-1 mr-[2px] w-[217px] h-[30px] rounded-full bg-[#fbfbfb] border border-[#dcdcdc] flex items-center pl-[9px] pr-1">
          <Svg className="w-4 h-4 text-[#2c2c2c]"><circle cx="10" cy="10" r="8" strokeWidth="2.600" /><path d="M16 16l7 7" strokeWidth="3" /></Svg>
          <input aria-label="Search" placeholder="Search" className="ml-[10px] flex-1 min-w-0 bg-transparent text-[12px] placeholder:text-[#5f5f5f]" />
          <Svg className="w-5 h-5 text-[#2a86d6]">
            <path d="M2 22V12A10 10 0 1 1 12 22z" fill="#f2f9ff" />
            <path d="M9 4.500v12.500" strokeWidth="2.600" />
            <path d="M11.500 9l5 2.500v3.500L9.500 18.500l-1-2.500 4-2z" fill="currentColor" stroke="none" />
          </Svg>
        </div>
        <Task label="Task view">
          <Svg>
            <path d="M7 1h16v15H7z" fill="#fafafa" stroke="none" />
            <path d="M1 7h17v16H1z" fill="#2b2b2b" stroke="none" />
            <path d="M7 7h11v9H7z" fill="#bdbdbd" stroke="none" />
          </Svg>
        </Task>
        <Task label="Chat">
          <Svg>
            <path d="M1 23l1-6A11 11 0 1 1 12 23z" fill="#6c64c4" stroke="none" />
            <path d="M6 8h8v8H6zM15 11l3.500-2.500v7L15 13z" fill="#fff" stroke="none" />
          </Svg>
        </Task>
        <Task label="File Explorer">
          <Svg>
            <path d="M0 3a2 2 0 0 1 2-2h7l2 3h11a2 2 0 0 1 2 2v5H0z" fill="#e0a21c" stroke="none" />
            <path d="M0 7h24v14a2 2 0 0 1-2 2H2a2 2 0 0 1-2-2z" fill="#fbcf4a" stroke="none" />
            <path d="M5 18a2 2 0 0 1 2-2h10a2 2 0 0 1 2 2v5H5z" fill="#2a7fd0" stroke="none" />
          </Svg>
        </Task>
        <Task label="Edge">
          <Svg>
            <circle cx="12" cy="12" r="12" fill="#1668b8" stroke="none" />
            <path d="M0 11C1 4 6 0 12 0c7 0 12 5 12 10 0 4-3 6-6 6s-4-1-3-3c0-5-9-6-15-2z" fill="#3fc8a4" stroke="none" />
            <path d="M0 12C2 5 13 4 15 11c-5-1-7 6-1 10-5 4-15-1-14-9z" fill="#1e90dc" stroke="none" />
            <path d="M10 14c0 4 6 7 12 4-3 4-7 6-11 5-4-3-4-7-1-9z" fill="#174d8c" stroke="none" />
            <path d="M14.500 10.500c1.500 1.500-.5 3 .5 4.500 2 2 6 1.500 8.500-.5l.5 2c-5 3-14 3-13-3 .5-2 2-3 3.500-3z" fill="#ededed" stroke="none" />
          </Svg>
        </Task>
        <Task label="Microsoft Store">
          <Svg>
            <path d="M8 7V2h8v5" stroke="#3cb4ea" strokeWidth="2" />
            <path d="M1 6h22v14a3 3 0 0 1-3 3H4a3 3 0 0 1-3-3z" fill="#164f86" stroke="none" />
            <path d="M7 9.500h4.500V14H7z" fill="#f25022" stroke="none" />
            <path d="M12.500 9.500H17V14h-4.500z" fill="#7fba00" stroke="none" />
            <path d="M7 15h4.500v4.500H7z" fill="#00a4ef" stroke="none" />
            <path d="M12.500 15H17v4.500h-4.500z" fill="#ffb900" stroke="none" />
          </Svg>
        </Task>
        <Task label="Chrome" running>
          <Svg className="w-[26px] h-[26px] overflow-visible">
            <circle cx="12" cy="12" r="11" fill="#fbc116" stroke="none" />
            <path d="M2.500 6.500A11 11 0 0 1 21.500 6.500H12L7.300 15z" fill="#e33b2e" stroke="none" />
            <path d="M2.500 6.500L8 15l5 2-3 5.800A11 11 0 0 1 2.500 6.500z" fill="#2da94f" stroke="none" />
            <circle cx="12" cy="12" r="5" fill="#3f7de8" stroke="#fff" strokeWidth="1.500" />
            <circle cx="20" cy="3" r="6.500" fill="#e8e8ee" stroke="none" />
            <path d="M15.500 -1h9v4c0 3-2 5-4.500 6-2.500-1-4.500-3-4.500-6z" fill="#34346e" stroke="none" />
            <path d="M20 0v7M17.500 2.500h5" stroke="#fff" strokeWidth="1" />
          </Svg>
        </Task>
        <Task label="Adobe Acrobat" running active>
          <Svg>
            <rect x="1" y="1" width="22" height="22" rx="4" fill="#b30b00" stroke="none" />
            <path d="M5.500 17c4-2.500 6-7 6-12 .5 5 2.500 8.500 7 9.500-5-.3-9 .5-13 2.500z" stroke="#fff" strokeWidth="1.600" />
          </Svg>
        </Task>
        <Task label="Magnifier" running>
          <Svg>
            <rect x=".7" y="2" width="22.600" height="20" fill="#f6fbff" stroke="#4a6a80" strokeWidth="1.200" />
            <path d="M6.500 5h11v14h-11z" fill="#1879cc" stroke="none" />
            <path d="M4 5v15M20 5v15" stroke="#8ea2b0" strokeWidth="2.600" strokeDasharray="1.400 1.400" />
          </Svg>
        </Task>
      </div>

      <div className="flex-1 flex items-center justify-end pr-5 text-[#1c1c1c]">
        <button aria-label="Hidden icons"><Svg className="w-3 h-3"><path d="M2 17L12 7l10 10" strokeWidth="2.600" /></Svg></button>
        <button aria-label="OneDrive" className="ml-[17px]">
          <Svg className="w-[18px] h-[18px]"><path d="M5.500 18.500C0 18.500 0 12 5 11 6.500 5 14 4.500 16.500 9.500c7.500 0 8.500 9 2 9z" fill="#9a9a9a" strokeWidth="1.500" /></Svg>
        </button>
        <button aria-label="Network" className="ml-[13px]">
          <Svg className="w-[18px] h-[18px]"><path d="M13 3H2v15h16v-4M6 22h10M9 18v4M13 18v4M17 3h5v6h-5zM19.500 9v14" strokeWidth="1.600" /></Svg>
        </button>
        <button aria-label="Volume" className="ml-[7px]">
          <Svg className="w-[17px] h-[17px]"><path d="M1 9h4l5-5v16l-5-5H1zM13 9c1.500 2 1.500 4 0 6M16 6.500c3 3.500 3 7.500 0 11M19 4c4.500 5 4.500 11 0 16" strokeWidth="1.600" /></Svg>
        </button>
        <button className="ml-4 flex items-center gap-[7px]">
          <span className="flex flex-col text-right text-[12px] leading-4">
            <span>11:31 AM</span>
            <span>7/26/2023</span>
          </span>
          <span className="w-4 h-4 rounded-full bg-[#0f66b5] text-white text-[10px] leading-4 text-center">3</span>
        </button>
      </div>
    </footer>
  );
}

export default function App() {
  return (
    <div className="min-h-screen flex flex-col bg-[#fafafa] overflow-hidden font-['Open_Sans','Noto_Sans',sans-serif]">
      <WindowHeader />
      <MainToolbar />
      <FormToolbar />

      <main className="flex-1 flex">
        <div className="w-[45px] border-r border-[#c6c6c6] flex flex-col items-center pt-[11px] text-[#6e6e6e]">
          <Tool label="Page thumbnails" icon={pagesIcon} className="mb-[3px]" />
          <Tool label="Bookmarks" icon={bookmarkIcon} className="mb-px" />
          <Tool label="Attachments" icon={clipIcon} />
        </div>
        <button aria-label="Expand navigation pane" className="w-[18px] bg-[#e9e9e9] flex items-center justify-center text-[#6e6e6e]">
          <svg viewBox="0 0 6 11" className="w-[6px] h-[11px]" fill="currentColor"><path d="M6 0v11L0 5.500z" /></svg>
        </button>

        {/* Document canvas */}
        <div className="relative flex-1 bg-white overflow-hidden">
          <FormField name="First Number" className="left-[101px] top-[142px]" />
          <FormField name="Second Number" className="left-[622px] top-[141px]" />
          <FormField name="Sum of Numbers" className="left-[1136px] top-[140px]" selected />
        </div>

        <div className="w-[18px] bg-[#f0f0f0] border-l border-[#c6c6c6] flex flex-col items-center">
          <div className="self-stretch h-2 bg-[#e4e4e4] border-b border-r border-[#b4b4b4]" />
          <div className="mt-[17px] w-[2px] h-[187px] bg-[#868686]" />
        </div>
        <button aria-label="Collapse tools pane" className="w-[18px] bg-[#e9e9e9] border-l border-[#c6c6c6] flex items-center justify-center text-[#6e6e6e]">
          <svg viewBox="0 0 6 11" className="w-[6px] h-[11px]" fill="currentColor"><path d="M0 0v11l6-5.500z" /></svg>
        </button>

        <SidePanel />

        <nav aria-label="Tools" className="w-[46px] flex flex-col">
          {rail.map((r) => (
            <button key={r.label} aria-label={r.label} className={clsx("w-[46px] h-[46px] flex items-center justify-center", r.color)}>
              {r.icon}
            </button>
          ))}
        </nav>
      </main>

      <Taskbar />

      <FieldSelectionDialog />
    </div>
  );
}
